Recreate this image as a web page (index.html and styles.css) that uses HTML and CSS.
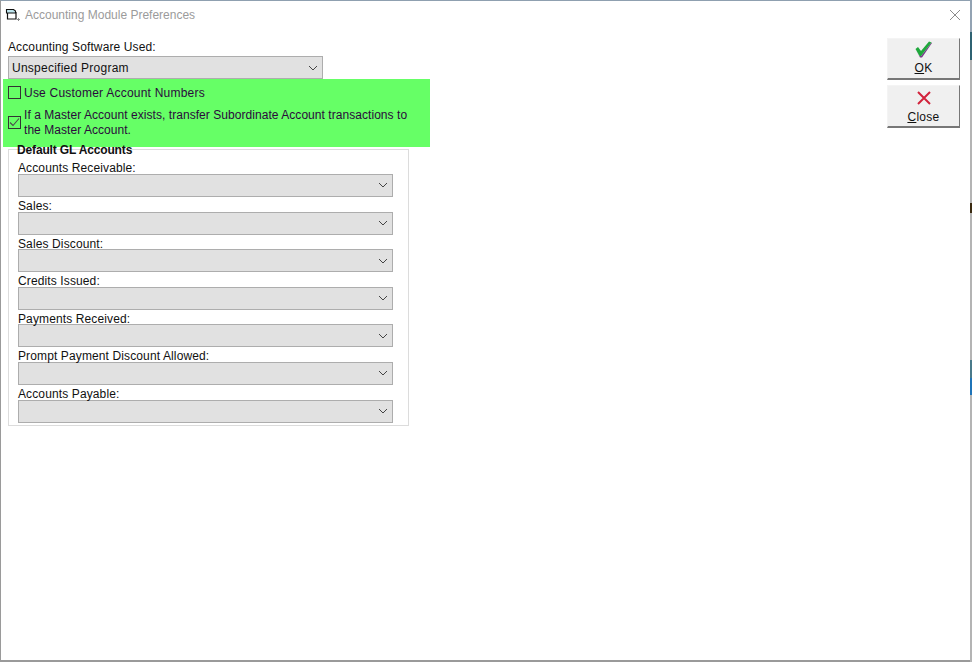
FILE: index.html
```html
<!DOCTYPE html>
<html lang="en">
<head>
  <meta charset="UTF-8">
  <title>Accounting Module Preferences</title>
  <link rel="stylesheet" href="styles.css">
</head>
<body>
  <div class="screen">
    <div class="window">
      <div class="titlebar">
        <svg class="title-icon" width="16" height="16" viewBox="0 0 16 16">
          <path d="M3.500 5.500v6.500h8.500v-7" fill="#fff" stroke="#111" stroke-width="1.200"/>
          <path d="M2.500 2.500h7l2 1.500v2h-9z" fill="#bfe6ef" stroke="#111" stroke-width="1.100"/>
          <path d="M13 12.500h3M14.500 11v3" stroke="#8a8a8a" stroke-width="1"/>
        </svg>
        <span class="title-text">Accounting Module Preferences</span>
        <svg class="title-close" width="12" height="12" viewBox="0 0 12 12">
          <path d="M1 1l10 10M11 1L1 11" stroke="#8c8c8c" stroke-width="1" fill="none"/>
        </svg>
      </div>

      <div class="content">
        <div class="form">
          <label class="field-label">Accounting Software Used:</label>
          <div class="combo combo-wide">
            <span>Unspecified Program</span>
            <svg class="chevron" width="10" height="6" viewBox="0 0 10 6"><path d="M1 1l4 4 4-4" stroke="#444" fill="none"/></svg>
          </div>

          <div class="highlight">
            <div class="check-row">
              <span class="checkbox"></span>
              <span class="check-label">Use Customer Account Numbers</span>
            </div>
            <div class="check-row check-row-tall">
              <span class="checkbox">
                <svg width="11" height="11" viewBox="0 0 11 11"><path d="M1 5.500l3 3 6-7" stroke="#4a4a4a" stroke-width="1.100" fill="none"/></svg>
              </span>
              <span class="check-text">If a Master Account exists, transfer Subordinate Account transactions to the Master Account.</span>
            </div>
          </div>

          <div class="group">
            <div class="group-title">Default GL Accounts</div>

            <label class="field-label">Accounts Receivable:</label>
            <div class="combo"><svg class="chevron" width="10" height="6" viewBox="0 0 10 6"><path d="M1 1l4 4 4-4" stroke="#444" fill="none"/></svg></div>

            <label class="field-label">Sales:</label>
            <div class="combo"><svg class="chevron" width="10" height="6" viewBox="0 0 10 6"><path d="M1 1l4 4 4-4" stroke="#444" fill="none"/></svg></div>

            <label class="field-label">Sales Discount:</label>
            <div class="combo"><svg class="chevron" width="10" height="6" viewBox="0 0 10 6"><path d="M1 1l4 4 4-4" stroke="#444" fill="none"/></svg></div>

            <label class="field-label">Credits Issued:</label>
            <div class="combo"><svg class="chevron" width="10" height="6" viewBox="0 0 10 6"><path d="M1 1l4 4 4-4" stroke="#444" fill="none"/></svg></div>

            <label class="field-label">Payments Received:</label>
            <div class="combo"><svg class="chevron" width="10" height="6" viewBox="0 0 10 6"><path d="M1 1l4 4 4-4" stroke="#444" fill="none"/></svg></div>

            <label class="field-label">Prompt Payment Discount Allowed:</label>
            <div class="combo"><svg class="chevron" width="10" height="6" viewBox="0 0 10 6"><path d="M1 1l4 4 4-4" stroke="#444" fill="none"/></svg></div>

            <label class="field-label">Accounts Payable:</label>
            <div class="combo"><svg class="chevron" width="10" height="6" viewBox="0 0 10 6"><path d="M1 1l4 4 4-4" stroke="#444" fill="none"/></svg></div>
          </div>
        </div>

        <div class="buttons">
          <button class="tool-button ok-button" type="button">
            <svg width="20" height="20" viewBox="0 0 20 20">
              <path d="M2 10l4 7.500h2L18 3l-.5-.5L7 16H5.500z" fill="#7a3a8a"/>
              <path d="M1.500 9L4 7l3 4 8-9.500 2.500 1L7 16H5.500z" fill="#1fa83c"/>
            </svg>
            <span><u>O</u>K</span>
          </button>
          <button class="tool-button close-button" type="button">
            <svg width="16" height="16" viewBox="0 0 16 16">
              <path d="M2 2l12 12M14 2L2 14" stroke="#d2233c" stroke-width="2" fill="none"/>
            </svg>
            <span><u>C</u>lose</span>
          </button>
        </div>
      </div>
    </div>
    <div class="edge"></div>
  </div>
</body>
</html>
```

FILE: styles.css
```css
* {
  box-sizing: border-box;
}
body {
  margin: 0;
  font-family: "Liberation Sans", Arial, sans-serif;
  font-size: 12px;
  color: #111;
  background: #fff;
}
.screen {
  display: flex;
  width: 972px;
  height: 662px;
  overflow: hidden;
}
.window {
  flex: 1;
  background: #fff;
  border: 1px solid #9a9a9a;
  border-top-color: #8fa0b0;
  border-right: none;
  border-bottom-width: 2px;
}
/* what shows of the windows behind, down the right side */
.edge {
  width: 2px;
  background: linear-gradient(to bottom,
    #93a3b3 0, #93a3b3 32px,
    #2f6272 32px, #2f6272 60px,
    #b4b4b4 60px, #b4b4b4 203px,
    #3a2a10 203px, #3a2a10 213px,
    #b4b4b4 213px, #b4b4b4 360px,
    #4a7a8a 360px, #4a7a8a 378px,
    #1f74b8 378px, #1f74b8 395px,
    #b4b4b4 395px);
}
.titlebar {
  display: flex;
  align-items: center;
  height: 28px;
  padding: 0 9px 0 3px;
}
.title-icon {
  margin-right: 5px;
}
.title-text {
  flex: 1;
  color: #9b9b9b;
}
.content {
  display: flex;
  justify-content: space-between;
  padding: 10px 10px 0 7px;
}
.form {
  width: 402px;
}
.field-label {
  display: block;
  height: 14.600px;
  line-height: 18px;
  letter-spacing: 0.12px;
  white-space: nowrap;
}
.form > .field-label {
  height: 17px;
  line-height: 16px;
}
.combo {
  display: flex;
  align-items: center;
  justify-content: space-between;
  height: 23px;
  padding: 0 4px 0 3px;
  background: #e1e1e1;
  border: 1px solid #adadad;
  letter-spacing: 0.25px;
}
.combo-wide {
  width: 315px;
}
.chevron {
  margin-left: auto;
}
.highlight {
  width: 427px;
  height: 68px;
  margin-left: -5px;
  padding: 0 5px;
  background: #66ff66;
  color: #2a0a3c;
}
.check-row {
  display: flex;
  align-items: center;
  gap: 3px;
  height: 26px;
}
.check-label {
  padding-top: 1px;
  letter-spacing: 0.22px;
}
.check-row-tall {
  height: 34px;
  margin-top: 1px;
  line-height: 15px;
}
.check-row-tall .checkbox {
  margin-top: -1px;
}
.checkbox {
  flex: none;
  display: flex;
  align-items: center;
  justify-content: center;
  width: 13px;
  height: 13px;
  border: 1px solid #333;
}
.check-text {
  width: 395px;
  letter-spacing: 0.05px;
}
.group {
  position: relative;
  width: 401px;
  height: 277px;
  margin-top: 2px;
  padding: 9.400px 15px 0 9px;
  border: 1px solid #dcdcdc;
}
.group-title {
  position: absolute;
  top: -7px;
  left: 8px;
  height: 14px;
  line-height: 14px;
  font-weight: bold;
  letter-spacing: -0.15px;
  color: #111;
}
.buttons {
  display: flex;
  flex-direction: column;
  gap: 5px;
  margin-top: -1px;
}
.tool-button {
  display: flex;
  flex-direction: column;
  align-items: center;
  width: 73px;
  height: 42px;
  padding: 1px 0 0;
  background: #f0f0f0;
  border: 1px solid #f4f4f4;
  border-right: 1px solid #777;
  border-bottom: 2px solid #777;
  font-family: inherit;
  font-size: 12px;
  letter-spacing: 0.3px;
  color: #111;
}
.ok-button span {
  margin-top: 1px;
}
.close-button {
  height: 43px;
  padding-top: 4px;
}
.close-button span {
  margin-top: 4px;
}
```
